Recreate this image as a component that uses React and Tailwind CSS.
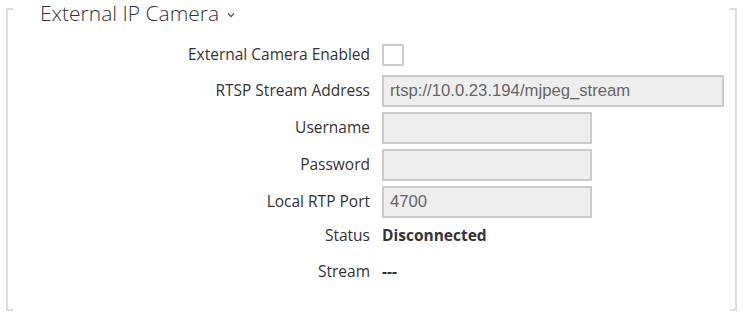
import React from 'react';

const labelCls = "text-right text-[15.5px] leading-none text-[#333]";
const inputCls =
  "h-[32px] bg-[#eeeeee] border-2 border-[#cccccc] px-[6px] text-[16.7px] text-[#666] outline-none";

function Row({ label, className = "", children }) {
  return (
    <div className={`grid grid-cols-[364px_1fr] gap-x-[12px] items-center ${className}`}>
      <div className={labelCls}>{label}</div>
      <div className="flex items-center">{children}</div>
    </div>
  );
}

export default function App() {
  return (
    <div
      className="w-[743px] h-[317px] bg-white pt-[8px] px-[6px] flex"
      style={{ fontFamily: '"Open Sans", "Noto Sans", sans-serif' }}
    >
      {/* left bracket */}
      <div className="w-[7px] h-[303px] border-l-2 border-t-2 border-b-2 border-[#dddddd]" />

      <div className="flex-1 -mt-[8px] flex flex-col">
        <div className="h-[26px] pl-[34px] -ml-[7px] flex items-center gap-[8px]">
          <span className="text-[21px] font-light text-[#333] leading-none">External IP Camera</span>
          <svg width="8" height="6" viewBox="0 0 8 6" className="mt-[3px]">
            <polyline points="1,1.5 4,4.5 7,1.5" fill="none" stroke="#555" strokeWidth="1.3" />
          </svg>
        </div>

        <div className="-ml-[7px]">
          <Row label="External Camera Enabled" className="mt-[18px] h-[22px]">
            <span className="w-[22px] h-[22px] border-2 border-[#cccccc] bg-white" />
          </Row>
          <Row label="RTSP Stream Address" className="mt-[9px] h-[32px]">
            <input
              readOnly
              value="rtsp://10.0.23.194/mjpeg_stream"
              className={`${inputCls} w-[342px]`}
              style={{ fontFamily: '"Liberation Sans", Arial, sans-serif' }}
            />
          </Row>
          <Row label="Username" className="mt-[5px] h-[32px]">
            <input readOnly value="" className={`${inputCls} w-[210px]`} />
          </Row>
          <Row label="Password" className="mt-[5px] h-[32px]">
            <input readOnly type="password" value="" className={`${inputCls} w-[210px]`} />
          </Row>
          <Row label="Local RTP Port" className="mt-[5px] h-[32px]">
            <input
              readOnly
              value="4700"
              className={`${inputCls} w-[210px]`}
              style={{ fontFamily: '"Liberation Sans", Arial, sans-serif' }}
            />
          </Row>
          <Row label="Status" className="mt-[5px] h-[26px]">
            <span className="text-[15.5px] font-bold text-[#333] leading-none">Disconnected</span>
          </Row>
          <Row label="Stream" className="mt-[10px] h-[26px]">
            <span className="text-[15.5px] font-bold text-[#333] leading-none">---</span>
          </Row>
        </div>
      </div>

      {/* right bracket */}
      <div className="w-[7px] h-[303px] border-r-2 border-t-2 border-b-2 border-[#dddddd]" />
    </div>
  );
}
